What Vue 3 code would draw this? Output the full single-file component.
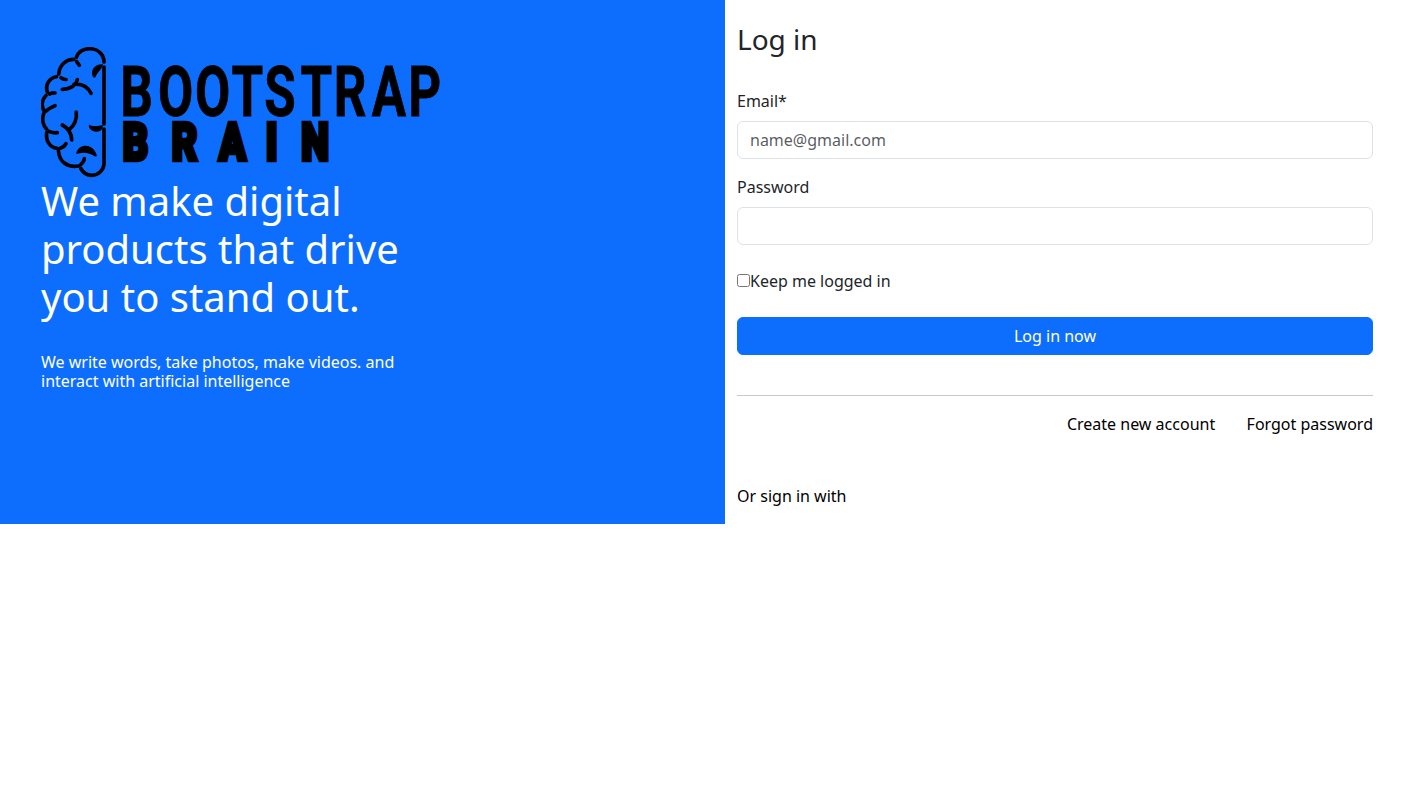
<script setup>
import { ref } from 'vue'

const email = ref('')
const password = ref('')
const remember = ref(false)
</script>

<template>
  <main class="login">
    <section class="intro">
      <svg class="logo" viewBox="41 47 400 131" role="img" aria-label="Bootstrap Brain">
        <g class="strokes">
          <path d="M76.500 57C78.500 52 83.500 48.700 90 48.700C98 48.700 104 54.500 104 62" />
          <path d="M104 67V124M104 129V163C104 170 98.500 175.300 91.700 175.300C87 175.300 83 172.500 80.800 168.500" />
          <path d="M58.700 74C59.500 65 66 59.300 73.800 59.300" />
          <path d="M56.500 76.700C49 78 45 85 47.300 92" />
          <path d="M46 95.500C41.500 100 41.500 106 43.800 110.500" />
          <path d="M43.800 113.500C41.500 119 43 125.500 46.500 129" />
          <path d="M46.700 132.500C45.500 141 50 147.500 57 148.300" />
          <path d="M58.500 151C59 161 67 168 78.500 166" />
          <path d="M76.600 61.500L79.300 65.300M61 77.700Q63 79.600 66 79.500M49.500 94Q52 92.800 55 93M46 111Q50 107.500 55 105.700" />
          <path d="M49 131.300Q53 133.200 57.300 132.700M60 148.300Q64 147.500 66 143.700M80.800 164.500Q84 162 84.300 158.700" />
          <path d="M62.300 89.300C69 89.500 76 86 77.300 79.500M74 84.300C82 83.500 88 87.500 91 93.300" />
          <path d="M76.200 112C77.500 119 74 126 69.500 129.300M62.300 125C68 128 71.500 133 71.700 140" />
        </g>
        <path d="M103 64.200C96 63.500 91.300 68.500 92 74C92.300 77.500 95 78.800 95.800 76.500C97 72.500 101.500 70.500 103 64.200Z" />
        <path d="M89 124.500C91 126.500 98 126.500 102.500 125C104 129 100 132 96 131.800C91.500 131.500 88 128 89 124.500Z" />
        <path d="M76.300 153C79 143 93 143 96.800 155C97 157 95 157 93.500 155.500C88 152.500 84 152 78.500 153.500Q76 154.500 76.300 153Z" />
        <text class="wordmark" transform="translate(0 115.700) scale(.73 1)" x="164.700 216.300 267 317 362 411.700 457.200 509.300 559.300">BOOTSTRAP</text>
        <text class="submark" transform="translate(0 160) scale(.76 1)" x="161.500 226 288 349.800 396.500">BRAIN</text>
      </svg>
      <h1>We make digital<br />products that drive<br />you to stand out.</h1>
      <p>We write words, take photos, make videos. and<br />interact with artificial intelligence</p>
    </section>

    <section class="panel">
      <h2>Log in</h2>
      <form @submit.prevent>
        <label for="email">Email*</label>
        <input id="email" v-model="email" class="field" type="email" placeholder="name@gmail.com" />
        <label for="password">Password</label>
        <input id="password" v-model="password" class="field" type="password" />
        <div class="remember">
          <input id="remember" v-model="remember" type="checkbox" />
          <label for="remember">Keep me logged in</label>
        </div>
        <button type="submit">Log in now</button>
      </form>
      <hr />
      <nav>
        <a href="#">Create new account</a>
        <a href="#">Forgot password</a>
      </nav>
      <p class="alternate">Or sign in with</p>
    </section>
  </main>
</template>

<style>
body {
  margin: 0;
  background: #fff;
}
</style>

<style scoped>
* {
  box-sizing: border-box;
}
.login {
  display: grid;
  grid-template-columns: 725px 660px;
  height: 524px;
  font: 16px/24px "Noto Sans", sans-serif;
  color: #212529;
}
.intro {
  padding: 47px 41px 0;
  background: #0d6efd;
  color: #fff;
}
.logo {
  display: block;
  width: 400px;
  height: 131px;
}
.strokes {
  fill: none;
  stroke: #000;
  stroke-width: 3.7;
  stroke-linecap: round;
  stroke-linejoin: round;
}
.wordmark {
  font: 700 70px Roboto, sans-serif;
  stroke: #000;
  stroke-width: 0.8;
}
.submark {
  font: 900 52px Roboto, sans-serif;
  stroke: #000;
  stroke-width: 4.5;
}
h1 {
  margin: -1px 0 32px;
  font-size: 40px;
  font-weight: 400;
  line-height: 48px;
}
.intro p {
  margin: 0;
  line-height: 19.200px;
}
.panel {
  padding: 22px 12px 0;
}
h2 {
  margin: 0 0 33px;
  font-size: 28px;
  font-weight: 400;
  line-height: 34px;
}
form {
  display: flex;
  flex-direction: column;
}
form > label {
  margin-bottom: 8px;
}
.field {
  width: 100%;
  height: 38px;
  margin: 0 0 16px;
  padding: 6px 12px;
  border: 1px solid #dee2e6;
  border-radius: 6px;
  background: #fff;
  color: #212529;
  font: inherit;
}
.field::placeholder {
  color: rgba(33, 37, 41, 0.75);
  opacity: 1;
}
.remember {
  display: flex;
  margin: 8px 0 24px;
}
.remember input {
  width: 13px;
  height: 13px;
  margin: 5px 0 0;
}
button {
  height: 38px;
  padding: 6px 12px;
  border: 1px solid #0d6efd;
  border-radius: 6px;
  background: #0d6efd;
  color: #fff;
  font: inherit;
}
hr {
  height: 1px;
  margin: 40px 0 16px;
  border: 0;
  background: #c8c9ca;
}
nav {
  display: flex;
  justify-content: flex-end;
  gap: 31.400px;
}
nav a {
  color: #000;
  text-decoration: none;
}
.alternate {
  margin: 48px 0 0;
  color: #000;
}
</style>
